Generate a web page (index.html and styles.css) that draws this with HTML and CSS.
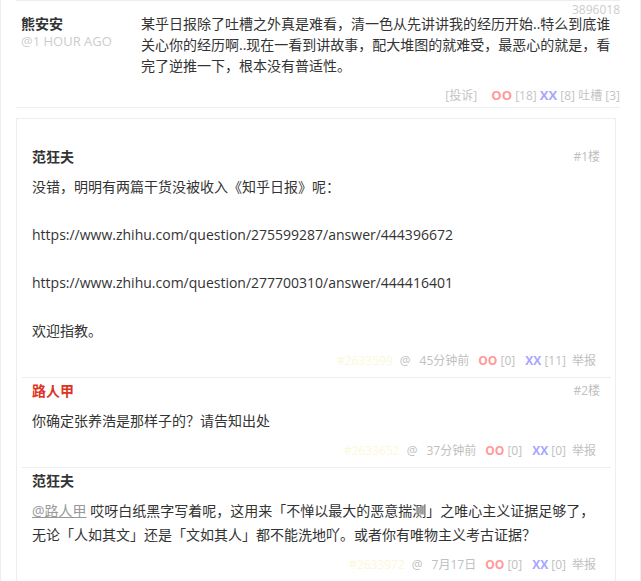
FILE: index.html
```html
<!DOCTYPE html>
<html lang="zh-CN">
<head>
  <meta charset="UTF-8">
  <title>吐槽</title>
  <link rel="stylesheet" href="styles.css">
</head>
<body>
  <div class="page">

    <div class="post">
      <div class="author">
        <strong>熊安安</strong>
        <small>@1 HOUR AGO</small>
      </div>
      <div class="post-body">
        <p>某乎日报除了吐槽之外真是难看，清一色从先讲讲我的经历开始..特么到底谁关心你的经历啊..现在一看到讲故事，配大堆图的就难受，最恶心的就是，看完了逆推一下，根本没有普适性。</p>
        <div class="vote">
          <a class="report">[投诉]</a>
          <span class="oo">OO</span> [<span>18</span>]
          <span class="xx">XX</span> [<span>8</span>]
          <a class="tucao-btn">吐槽 [3]</a>
        </div>
      </div>
      <span class="post-id">3896018</span>
    </div>

    <div class="comments">

      <div class="comment">
        <div class="comment-head">
          <strong>范狂夫</strong>
          <span class="floor">#1楼</span>
        </div>
        <div class="comment-text">没错，明明有两篇干货没被收入《知乎日报》呢：<br><br>https://www.zhihu.com/question/275599287/answer/444396672<br><br>https://www.zhihu.com/question/277700310/answer/444416401<br><br>欢迎指教。</div>
        <div class="comment-foot">
          <span class="cid">#2633599</span><a class="at">@</a><span class="time">45分钟前</span><span class="oo">OO</span> [0]<span class="xx">XX</span> [11]<a class="report">举报</a>
        </div>
      </div>

      <div class="comment">
        <div class="comment-head">
          <strong class="red">路人甲</strong>
          <span class="floor">#2楼</span>
        </div>
        <div class="comment-text">你确定张养浩是那样子的？请告知出处</div>
        <div class="comment-foot">
          <span class="cid">#2633652</span><a class="at">@</a><span class="time">37分钟前</span><span class="oo">OO</span> [0]<span class="xx">XX</span> [0]<a class="report">举报</a>
        </div>
      </div>

      <div class="comment">
        <div class="comment-head">
          <strong>范狂夫</strong>
        </div>
        <div class="comment-text"><a class="mention">@路人甲</a> 哎呀白纸黑字写着呢，这用来「不惮以最大的恶意揣测」之唯心主义证据足够了，无论「人如其文」还是「文如其人」都不能洗地吖。或者你有唯物主义考古证据？</div>
        <div class="comment-foot">
          <span class="cid">#2633972</span><a class="at">@</a><span class="time">7月17日</span><span class="oo">OO</span> [0]<span class="xx">XX</span> [0]<a class="report">举报</a>
        </div>
      </div>

    </div>
  </div>
</body>
</html>
```

FILE: styles.css
```css
html, body {
  margin: 0;
  overflow: hidden;
}

body {
  font-family: "Open Sans", "Noto Sans CJK SC", sans-serif;
  font-size: 14px;
  color: #333;
  background: #fff;
}

.page {
  width: 641px;
  height: 581px;
  box-sizing: border-box;
  border-left: 1px solid #eee;
  border-right: 1px solid #eee;
  padding: 0 20px 0 15px;
}

/* top post */
.post {
  position: relative;
  display: flex;
  border-top: 1px solid #eee;
  border-bottom: 1px solid #eee;
  padding: 12px 0 2px 5px;
}

.author {
  width: 120px;
  flex: none;
}

.author strong {
  display: block;
  line-height: 21px;
}

.author small {
  display: block;
  font-size: 13px;
  line-height: 14px;
  color: #ccc;
}

.post-body {
  flex: 1;
}

.post-body p {
  margin: 0;
  padding-right: 5px;
  line-height: 21px;
}

.vote {
  margin-top: 10px;
  font-size: 12px;
  line-height: 18px;
  text-align: right;
  color: #c4c4c4;
}

.vote .report {
  margin-right: 11px;
}

.oo {
  color: #ff9a9a;
  font-weight: bold;
}

.xx {
  color: #a6a6ff;
  font-weight: bold;
}

.vote .oo, .vote .xx {
  font-size: 13px;
}

.post-id {
  position: absolute;
  top: 1px;
  right: 0;
  font-size: 12px;
  line-height: 16px;
  color: #ccc;
}

/* comment box */
.comments {
  margin: 10px 4px 0 0;
  border: 1px solid #eee;
  padding: 25px 4px 0 5px;
}

.comment {
  padding: 1px 11px 4px 10px;
  border-bottom: 1px solid #eee;
}

.comment-head {
  display: flex;
  justify-content: space-between;
  line-height: 24px;
}

.comment-head .red {
  color: #dd3322;
}

.floor {
  font-size: 12px;
  color: #c0c0c0;
}

.comment-text {
  margin: 6px 0;
  line-height: 24px;
}

.mention {
  color: #999;
  text-decoration: underline;
}

.comment-foot {
  margin-right: 4px;
  font-size: 12px;
  line-height: 24px;
  text-align: right;
  color: #c0c0c0;
}

.comment-foot .cid {
  color: #fbf8d8;
}

.comment-foot .at {
  margin-left: 7px;
}

.comment-foot .time {
  margin-left: 9px;
}

.comment-foot .oo {
  margin-left: 9px;
}

.comment-foot .xx {
  margin-left: 10px;
}

.comment-foot .report {
  margin-left: 6px;
}
```
